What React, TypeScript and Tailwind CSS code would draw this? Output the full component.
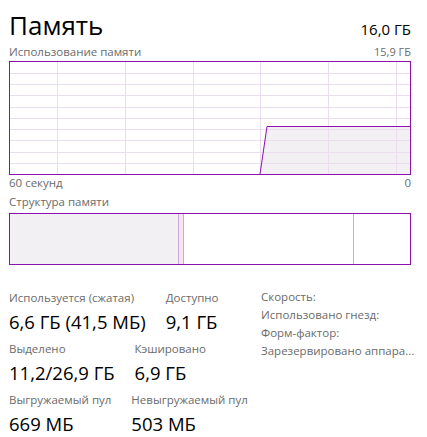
import React from "react";

const FONT = "font-['Segoe_UI','Open_Sans',sans-serif]";

function UsageChart() {
  const w = 402;
  const h = 114;
  const cols = [48.5, 116.5, 184.5, 251.5, 319.5, 387.5];
  const rows = [12.5, 23.5, 34.5, 46.5, 57.5, 68.5, 79.5, 91.5, 102.5];
  return (
    <svg width={w} height={h} className="block">
      <path d="M251 113 L258 66 L401 66 L401 113 Z" fill="#f2f0f3" />
      {cols.map((x) => (
        <line key={x} x1={x} y1={1} x2={x} y2={h - 1} stroke="#ebdcf0" strokeWidth={1} />
      ))}
      {rows.map((y) => (
        <line key={y} x1={1} y1={y} x2={w - 1} y2={y} stroke="#ebdcf0" strokeWidth={1} />
      ))}
      <path d="M251 113 L258 65.5 L401 65.5" fill="none" stroke="#8b12ae" strokeWidth={1} />
      <rect x={0.5} y={0.5} width={w - 1} height={h - 1} fill="none" stroke="#8b12ae" strokeWidth={1} />
    </svg>
  );
}

function Stat({ label, value }: { label: string; value: string }) {
  return (
    <div className="flex flex-col">
      <span className="text-[11.5px] leading-[16px] text-[#6b6b6b]">{label}</span>
      <span className="text-[18.5px] leading-[24px] text-black mt-[4px]">{value}</span>
    </div>
  );
}

export default function App() {
  return (
    <div className={`${FONT} w-[427px] h-[437px] bg-white px-[9px] overflow-hidden`}>
      {/* header */}
      <div className="flex items-baseline justify-between pt-[5px] w-[402px]">
        <span className="text-[26px] leading-[40px] text-black">Память</span>
        <span className="text-[15px] text-black">16,0 ГБ</span>
      </div>
      <div className="flex justify-between w-[402px] text-[11.5px] leading-[16px] text-[#6b6b6b] -mt-[1px]">
        <span>Использование памяти</span>
        <span className="text-[11px]">15,9 ГБ</span>
      </div>
      <div className="mt-[1px]">
        <UsageChart />
      </div>
      <div className="flex justify-between w-[402px] text-[11.5px] leading-[16px] text-[#6b6b6b]">
        <span>60 секунд</span>
        <span>0</span>
      </div>
      <div className="text-[11.5px] leading-[16px] text-[#6b6b6b] mt-[3px]">Структура памяти</div>

      {/* composition bar */}
      <div className="mt-[3px] w-[402px] h-[52px] border border-[#8b12ae] flex">
        <div className="w-[169px] bg-[#f2f0f3] border-r border-[#cfa6dc]" />
        <div className="w-[5px] bg-[#f1e6f4] border-r border-[#cfa6dc]" />
        <div className="w-[170px] border-r border-[#cfa6dc]" />
        <div className="flex-1" />
      </div>

      {/* stats */}
      <div className="flex mt-[25px]">
        <div className="w-[252px] flex flex-col gap-[7px]">
          <div className="flex gap-[20px]">
            <Stat label="Используется (сжатая)" value="6,6 ГБ (41,5 МБ)" />
            <Stat label="Доступно" value="9,1 ГБ" />
          </div>
          <div className="flex gap-[20px]">
            <Stat label="Выделено" value="11,2/26,9 ГБ" />
            <Stat label="Кэшировано" value="6,9 ГБ" />
          </div>
          <div className="flex gap-[20px]">
            <Stat label="Выгружаемый пул" value="669 МБ" />
            <Stat label="Невыгружаемый пул" value="503 МБ" />
          </div>
        </div>
        <div className="-mt-[2px] flex flex-col text-[11.5px] leading-[18px] text-[#6b6b6b] whitespace-nowrap">
          <span>Скорость:</span>
          <span>Использовано гнезд:</span>
          <span>Форм-фактор:</span>
          <span>Зарезервировано аппара...</span>
        </div>
      </div>
    </div>
  );
}
